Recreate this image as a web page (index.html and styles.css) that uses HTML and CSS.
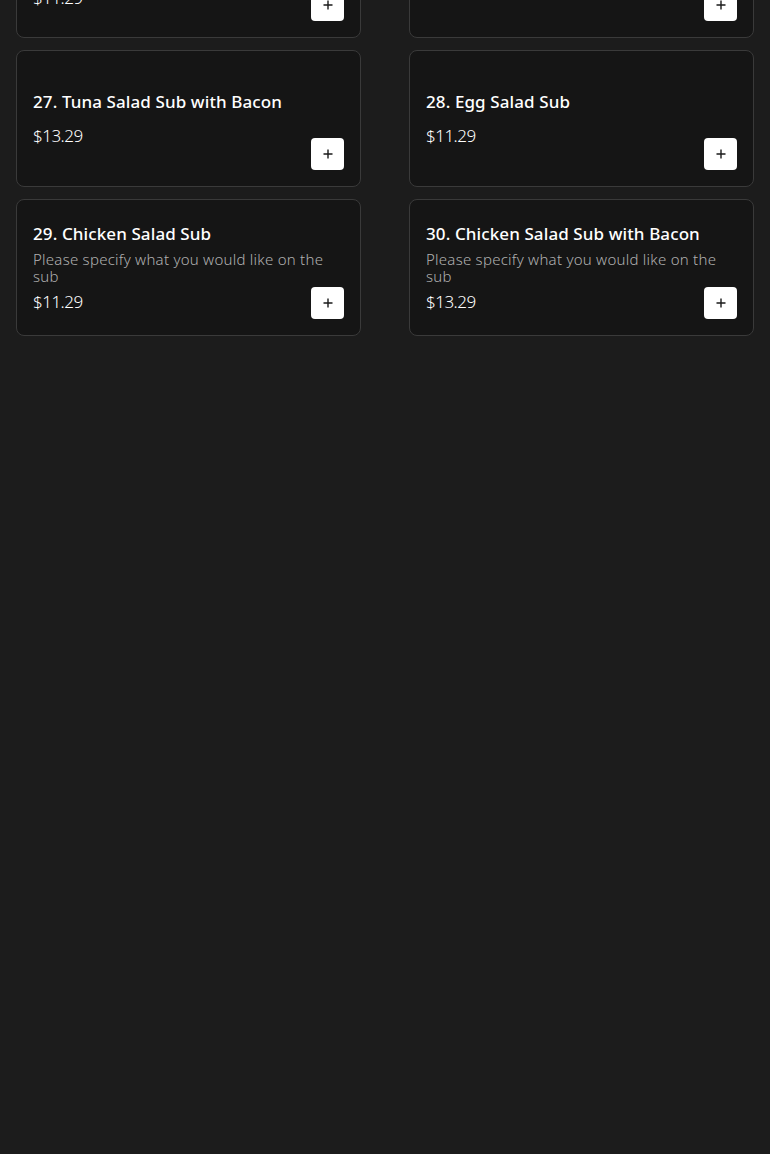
FILE: index.html
```html
<!DOCTYPE html>
<html lang="en">
<head>
<meta charset="utf-8">
<title>Menu</title>
<link rel="stylesheet" href="styles.css">
</head>
<body>
<main class="menu">
  <div class="grid">
    <article class="card">
      <div class="info">
        <h3 class="name">25. Tuna Salad Sub with Cheese and Extra Pickles</h3>
        <p class="price">$11.29</p>
      </div>
      <button class="add" aria-label="Add"><svg viewBox="0 0 12 12" width="12" height="12"><path d="M6 1.5v9M1.5 6h9" stroke="#1a1a1a" stroke-width="1.4" fill="none"/></svg></button>
    </article>
    <article class="card">
      <div class="info">
        <h3 class="name">26. Tuna Salad Sub</h3>
        <p class="price">$11.29</p>
      </div>
      <button class="add" aria-label="Add"><svg viewBox="0 0 12 12" width="12" height="12"><path d="M6 1.5v9M1.5 6h9" stroke="#1a1a1a" stroke-width="1.4" fill="none"/></svg></button>
    </article>
    <article class="card">
      <div class="info">
        <h3 class="name">27. Tuna Salad Sub with Bacon</h3>
        <p class="price">$13.29</p>
      </div>
      <button class="add" aria-label="Add"><svg viewBox="0 0 12 12" width="12" height="12"><path d="M6 1.5v9M1.5 6h9" stroke="#1a1a1a" stroke-width="1.4" fill="none"/></svg></button>
    </article>
    <article class="card">
      <div class="info">
        <h3 class="name">28. Egg Salad Sub</h3>
        <p class="price">$11.29</p>
      </div>
      <button class="add" aria-label="Add"><svg viewBox="0 0 12 12" width="12" height="12"><path d="M6 1.5v9M1.5 6h9" stroke="#1a1a1a" stroke-width="1.4" fill="none"/></svg></button>
    </article>
    <article class="card">
      <div class="info">
        <h3 class="name">29. Chicken Salad Sub</h3>
        <p class="desc">Please specify what you would like on the sub</p>
        <p class="price">$11.29</p>
      </div>
      <button class="add" aria-label="Add"><svg viewBox="0 0 12 12" width="12" height="12"><path d="M6 1.5v9M1.5 6h9" stroke="#1a1a1a" stroke-width="1.4" fill="none"/></svg></button>
    </article>
    <article class="card">
      <div class="info">
        <h3 class="name">30. Chicken Salad Sub with Bacon</h3>
        <p class="desc">Please specify what you would like on the sub</p>
        <p class="price">$13.29</p>
      </div>
      <button class="add" aria-label="Add"><svg viewBox="0 0 12 12" width="12" height="12"><path d="M6 1.5v9M1.5 6h9" stroke="#1a1a1a" stroke-width="1.4" fill="none"/></svg></button>
    </article>
  </div>
</main>
</body>
</html>
```

FILE: styles.css
```css
html, body {
  margin: 0;
  padding: 0;
  background: #1c1c1c;
}
body {
  font-family: "Noto Sans", "Open Sans", sans-serif;
  color: #ffffff;
  min-height: 1154px;
  overflow: hidden;
}
.menu {
  padding: 0 16px;
}
.grid {
  display: grid;
  grid-template-columns: 345px 345px;
  column-gap: 48px;
  row-gap: 12px;
  margin-top: -99px;
}
.card {
  box-sizing: border-box;
  height: 137px;
  background: #151515;
  border: 1px solid #3a3a3a;
  border-radius: 8px;
  padding: 16px;
  display: grid;
  grid-template-columns: 1fr;
  grid-template-rows: 1fr;
}
.info {
  grid-area: 1 / 1;
  align-self: center;
  min-width: 0;
  display: flex;
  flex-direction: column;
}
.name {
  margin: 0;
  font-size: 17px;
  font-weight: 500;
  line-height: 22px;
  letter-spacing: 0.1px;
  color: #ffffff;
}
.desc {
  margin: 6px 0 0;
  font-size: 15px;
  font-weight: 300;
  line-height: 17px;
  color: #b0b0b0;
  letter-spacing: 0.25px;
}
.price {
  margin: 12px 0 0;
  font-size: 17px;
  font-weight: 300;
  line-height: 22px;
  letter-spacing: -0.5px;
  color: #ffffff;
}
.desc + .price {
  margin-top: 6px;
}
.add {
  grid-area: 1 / 1;
  align-self: end;
  justify-self: end;
  width: 33px;
  height: 32px;
  padding: 0;
  border: none;
  border-radius: 4px;
  background: #ffffff;
  display: flex;
  align-items: center;
  justify-content: center;
  cursor: pointer;
}
```
